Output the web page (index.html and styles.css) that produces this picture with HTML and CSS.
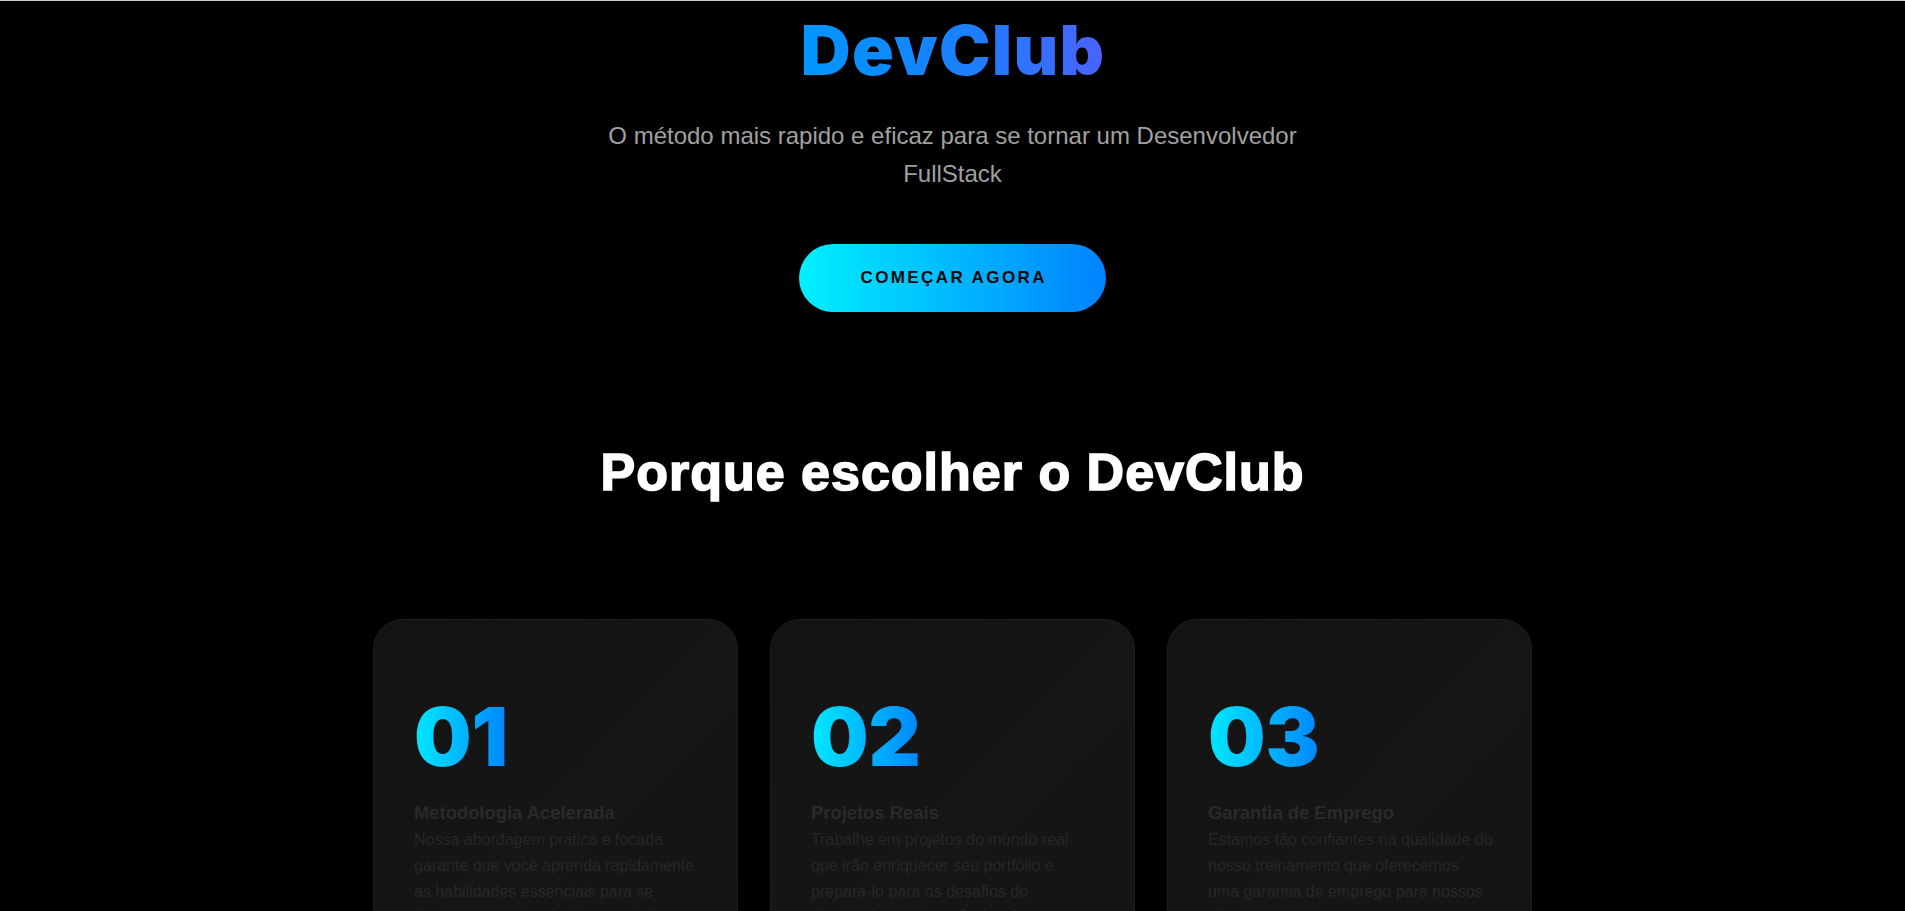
FILE: index.html
```html
<!DOCTYPE html>
<html lang="pt-BR">
<head>
<meta charset="utf-8">
<title>DevClub</title>
<link rel="stylesheet" href="styles.css">
</head>
<body>
  <main class="page">
    <section class="hero">
      <h1 class="logo">DevClub</h1>
      <p class="subtitle">O método mais rapido e eficaz para se tornar um Desenvolvedor FullStack</p>
      <a class="cta" href="#">COMEÇAR AGORA</a>
    </section>

    <section class="why">
      <h2 class="why-title">Porque escolher o DevClub</h2>
      <div class="cards">
        <article class="card">
          <div class="card-num"><span class="num-text">01</span></div>
          <h3 class="card-title">Metodologia Acelerada</h3>
          <p class="card-text">Nossa abordagem prática e focada garante que você aprenda rapidamente as habilidades essenciais para se destacar no mercado de tecnologia.</p>
        </article>
        <article class="card">
          <div class="card-num"><span class="num-text">02</span></div>
          <h3 class="card-title">Projetos Reais</h3>
          <p class="card-text">Trabalhe em projetos do mundo real que irão enriquecer seu portfólio e prepará-lo para os desafios do desenvolvimento profissional.</p>
        </article>
        <article class="card">
          <div class="card-num"><span class="num-text">03</span></div>
          <h3 class="card-title">Garantia de Emprego</h3>
          <p class="card-text">Estamos tão confiantes na qualidade do nosso treinamento que oferecemos uma garantia de emprego para nossos alunos.</p>
        </article>
      </div>
    </section>
  </main>
</body>
</html>
```

FILE: styles.css
```css
* {
  box-sizing: border-box;
}

html {
  background: #000;
}

body {
  margin: 0;
  background: #000;
  border-top: 1px solid #cfcfcf;
  font-family: "Liberation Sans", Arial, sans-serif;
  color: #fff;
}

.page {
  display: flex;
  flex-direction: column;
  align-items: center;
}

.hero {
  display: flex;
  flex-direction: column;
  align-items: center;
  text-align: center;
}

.logo {
  margin: 9px 0 0;
  padding-left: 1.3px;
  font-family: Inter, "Liberation Sans", sans-serif;
  font-size: 69px;
  line-height: 80px;
  font-weight: 900;
  letter-spacing: 1.3px;
  background: linear-gradient(90deg, #0096ff 0%, #1c7fff 55%, #4a62ff 100%);
  -webkit-background-clip: text;
  background-clip: text;
  -webkit-text-fill-color: transparent;
}

.subtitle {
  margin: 27px 0 0;
  max-width: 700px;
  font-size: 24px;
  line-height: 38.4px;
  color: #a0a0a0;
}

.cta {
  margin-top: 50px;
  display: flex;
  align-items: center;
  justify-content: center;
  width: 307px;
  height: 68px;
  padding-left: 2.4px;
  border-radius: 34px;
  background: linear-gradient(90deg, #00f0ff 0%, #0082ff 100%);
  color: #0a0a0a;
  font-size: 17px;
  font-weight: 700;
  letter-spacing: 2.4px;
  text-decoration: none;
}

.why {
  display: flex;
  flex-direction: column;
  align-items: center;
}

.why-title {
  margin: 130px 0 0;
  font-size: 52px;
  line-height: 61px;
  font-weight: 700;
  letter-spacing: 1px;
  -webkit-text-stroke: 1.6px #fff;
  color: #fff;
}

.cards {
  margin-top: 116px;
  display: grid;
  grid-template-columns: repeat(3, 365px);
  gap: 32px;
}

.card {
  min-height: 420px;
  padding: 77px 37.5px 40px 40px;
  border: 1px solid #1e1e1e;
  border-radius: 30px;
  background: linear-gradient(135deg, #131313 0%, #161616 50%, #141414 100%);
}

.card-num {
  line-height: 80px;
  height: 85px;
}

.num-text {
  display: inline-block;
  font-family: Inter, "Liberation Sans", sans-serif;
  font-size: 81px;
  font-weight: 900;
  letter-spacing: 0;
  background: linear-gradient(90deg, #00e8ff 0%, #0086ff 100%);
  -webkit-background-clip: text;
  background-clip: text;
  -webkit-text-fill-color: transparent;
}

.card-title {
  margin: 16px 0 0;
  font-size: 18.4px;
  line-height: 29.6px;
  font-weight: 700;
  color: #2a2a2a;
}

.card-text {
  margin: 0;
  font-size: 16px;
  line-height: 25.6px;
  color: #272727;
}
```
